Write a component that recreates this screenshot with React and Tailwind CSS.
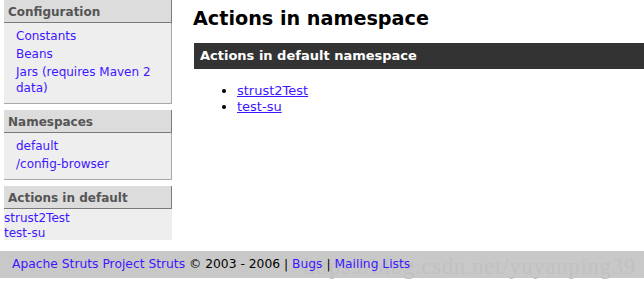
export default function App() {
  const link = "text-[#3d17ff] no-underline";
  const Header = ({ children }) => (
    <div className="h-[23px] bg-[#dcdcdc] border-b border-r border-[#7a7a7a] pl-[4px] pt-[1px] text-[12px] leading-[22px] font-bold text-[#555555]">
      {children}
    </div>
  );
  return (
    <div className="w-[644px] h-[288px] bg-white font-['DejaVu_Sans',sans-serif] text-[12px] text-black">
      <div className="flex">
        <div className="ml-[4px] w-[168px] shrink-0">
          <div className="mb-[6px]">
            <Header>Configuration</Header>
            <ul className="bg-[#eeeeee] border-r border-b border-[#a8a8a8] pl-[12px] pr-[2px] pt-[5px] pb-[5px]">
              <li className="leading-[16px] mb-[2px]"><a className={link}>Constants</a></li>
              <li className="leading-[16px] mb-[2px]"><a className={link}>Beans</a></li>
              <li className="leading-[16px] mb-[2px]"><a className={link}>Jars (requires Maven 2 data)</a></li>
            </ul>
          </div>
          <div className="mb-[6px]">
            <Header>Namespaces</Header>
            <ul className="bg-[#eeeeee] border-r border-b border-[#a8a8a8] pl-[12px] pt-[5px] pb-[5px]">
              <li className="leading-[16px] mb-[2px]"><a className={link}>default</a></li>
              <li className="leading-[16px] mb-[2px]"><a className={link}>/config-browser</a></li>
            </ul>
          </div>
          <div>
            <Header>Actions in default</Header>
            <ul className="bg-[#eeeeee] h-[31px] pt-[1px]">
              <li className="leading-[16px]"><a className={link}>strust2Test</a></li>
              <li className="leading-[14px]"><a className={link}>test-su</a></li>
            </ul>
          </div>
        </div>
        <div className="ml-[22px] flex-1">
          <h1 className="mt-[7px] ml-[-1px] text-[19.2px] leading-[24px] font-bold">Actions in namespace</h1>
          <div className="mt-[12px] h-[26px] bg-[#333333] pl-[6px] text-white text-[13px] font-bold leading-[26px]">
            Actions in default namespace
          </div>
          <ul className="mt-[14px] pl-[43px] list-disc text-[13px]">
            <li className="leading-[16px]"><a className="text-[#3d17ff] underline">strust2Test</a></li>
            <li className="leading-[16px]"><a className="text-[#3d17ff] underline">test-su</a></li>
          </ul>
        </div>
      </div>
      <div className="relative mt-[11px] h-[27px] bg-[#c8c8c8] text-[12.3px]">
        <span className="absolute left-[303px] top-[2px] font-['Liberation_Serif',serif] text-[23px] leading-[27px] text-[#c1c1c1] tracking-[0.6px] pointer-events-none select-none">https://blog.csdn.net/yuyanping39</span>
        <div className="relative pl-[12px] leading-[27px]">
          <a className={link}>Apache Struts Project Struts</a> © 2003 - 2006 | <a className={link}>Bugs</a> | <a className={link}>Mailing Lists</a>
        </div>
      </div>
    </div>
  );
}
